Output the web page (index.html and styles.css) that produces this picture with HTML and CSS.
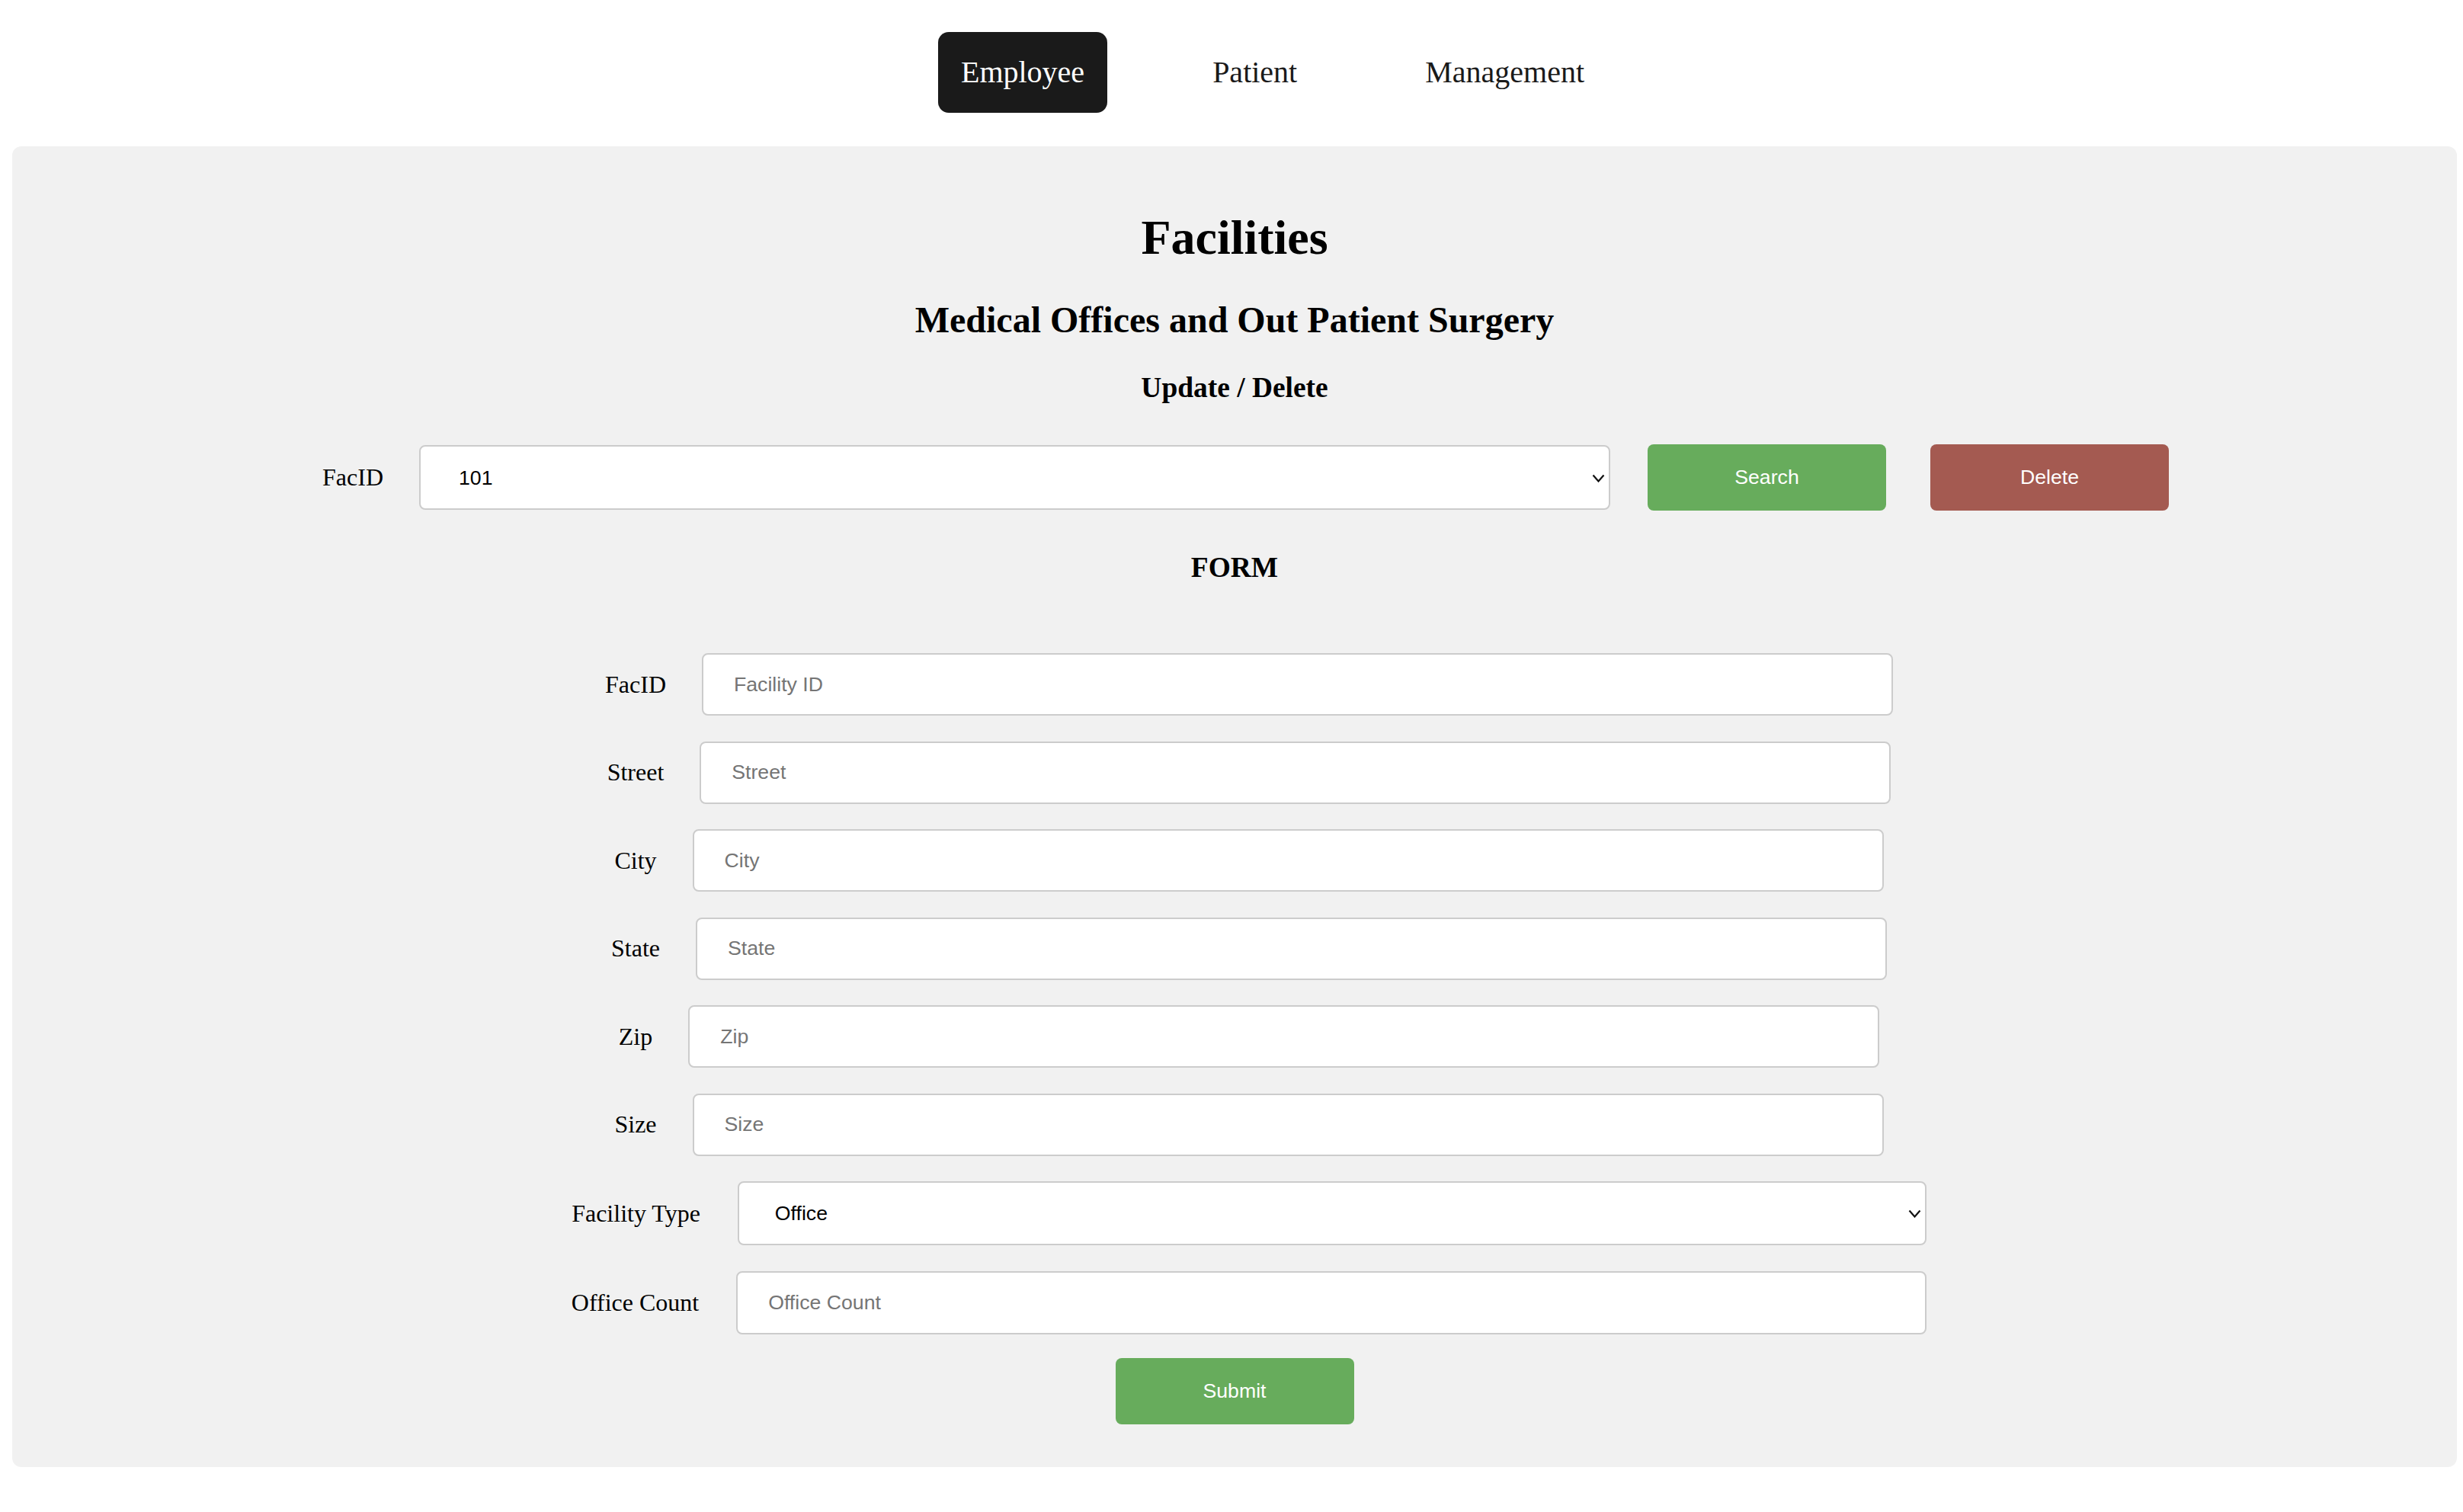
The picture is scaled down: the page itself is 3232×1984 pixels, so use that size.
FILE: index.html
```html
<!DOCTYPE html>
<html lang="en">
<head>
<meta charset="utf-8">
<title>Facilities</title>
<link rel="stylesheet" href="styles.css">
</head>
<body>
<nav class="topnav">
  <a class="navlink active" href="#">Employee</a>
  <a class="navlink" href="#">Patient</a>
  <a class="navlink" href="#">Management</a>
</nav>
<main class="panel">
  <h1 class="title">Facilities</h1>
  <h2 class="subtitle">Medical Offices and Out Patient Surgery</h2>
  <h3 class="section">Update / Delete</h3>
  <div class="searchrow">
    <label class="lbl">FacID</label>
    <div class="selwrap sel-top">
      <select class="sel"><option>101</option></select>
      <svg class="chev" width="17" height="11" viewBox="0 0 17 11"><polyline points="1.5,1.5 8.5,9.5 15.5,1.5" fill="none" stroke="#111" stroke-width="2.2"/></svg>
    </div>
    <button class="btn btn-green btn-search">Search</button>
    <button class="btn btn-red btn-delete">Delete</button>
  </div>
  <h3 class="section">FORM</h3>
  <form class="form">
    <div class="frow"><label class="lbl">FacID</label><input class="inp" placeholder="Facility ID"></div>
    <div class="frow"><label class="lbl">Street</label><input class="inp" placeholder="Street"></div>
    <div class="frow"><label class="lbl">City</label><input class="inp" placeholder="City"></div>
    <div class="frow"><label class="lbl">State</label><input class="inp" placeholder="State"></div>
    <div class="frow"><label class="lbl">Zip</label><input class="inp" placeholder="Zip"></div>
    <div class="frow"><label class="lbl">Size</label><input class="inp" placeholder="Size"></div>
    <div class="frow frow-wide">
      <label class="lbl">Facility Type</label>
      <div class="selwrap sel-form">
        <select class="sel"><option>Office</option></select>
        <svg class="chev" width="17" height="11" viewBox="0 0 17 11"><polyline points="1.5,1.5 8.5,9.5 15.5,1.5" fill="none" stroke="#111" stroke-width="2.2"/></svg>
      </div>
    </div>
    <div class="frow frow-wide"><label class="lbl">Office Count</label><input class="inp inp-wide" placeholder="Office Count"></div>
    <div class="submitrow"><button class="btn btn-green" type="button">Submit</button></div>
  </form>
</main>
</body>
</html>
```
FILE: styles.css
```css
html, body {
  background: #ffffff;
}
body {
  margin: 16px 8px 0 16px;
  font-family: "Liberation Serif", "Times New Roman", serif;
  color: #000;
}
.topnav {
  display: flex;
  justify-content: center;
  align-items: center;
  gap: 108px;
  padding: 26px 0 0 100px;
  margin-bottom: 44px;
}
.navlink {
  display: block;
  font-size: 40px;
  line-height: 46px;
  padding: 30px 30px;
  color: #1a1a1a;
  text-decoration: none;
  border-radius: 14px;
}
.navlink.active {
  background: #1a1a1a;
  color: #ffffff;
}
.panel {
  display: block;
  background: #f1f1f1;
  border-radius: 12px;
  padding: 40px 40px 56px;
}
.title {
  font-size: 64px;
  line-height: 74px;
  margin: 43px 0;
  text-align: center;
}
.subtitle {
  font-size: 48px;
  line-height: 55px;
  margin: 40px 0;
  text-align: center;
}
.section {
  font-size: 37.44px;
  line-height: 43px;
  margin: 37px 0;
  text-align: center;
}
.searchrow {
  display: flex;
  justify-content: center;
  align-items: center;
  padding: 16px 0 16px 29px;
}
.lbl {
  font-family: "Liberation Serif", "Times New Roman", serif;
  font-size: 32px;
  line-height: 37px;
  white-space: nowrap;
}
.selwrap {
  position: relative;
  display: block;
}
.sel-top {
  margin-left: 47px;
  margin-right: 49px;
}
.sel {
  appearance: none;
  -webkit-appearance: none;
  display: block;
  box-sizing: border-box;
  width: 1563px;
  height: 85px;
  border: 2px solid #cccccc;
  border-radius: 8px;
  background: #ffffff;
  padding: 0 40px 0 50px;
  font-family: "Liberation Sans", Arial, sans-serif;
  font-size: 26.67px;
  color: #000;
  margin: 0;
}
.sel-form .sel {
  width: 1560px;
  height: 84px;
  padding-left: 47px;
}
.chev {
  position: absolute;
  right: 7px;
  top: 50%;
  margin-top: -5px;
  pointer-events: none;
}
.btn {
  box-sizing: border-box;
  width: 313px;
  height: 87px;
  border: none;
  border-radius: 8px;
  font-family: "Liberation Sans", Arial, sans-serif;
  font-size: 26.67px;
  color: #ffffff;
  margin: 0;
  padding: 0;
}
.btn-green {
  background: #67ac5c;
}
.btn-red {
  background: #a45a51;
}
.btn-delete {
  margin-left: 58px;
}
.form {
  display: flex;
  flex-direction: column;
  gap: 33.5px;
  padding-top: 54px;
  margin: 0;
}
.frow {
  display: flex;
  justify-content: center;
  align-items: center;
  gap: 47px;
  padding-left: 38px;
}
.frow-wide {
  gap: 49px;
}
.inp {
  box-sizing: border-box;
  width: 1563px;
  height: 82px;
  border: 2px solid #cccccc;
  border-radius: 8px;
  background: #ffffff;
  padding: 0 40px;
  font-family: "Liberation Sans", Arial, sans-serif;
  font-size: 26.67px;
  color: #000;
  margin: 0;
}
.inp-wide {
  width: 1562px;
  height: 83px;
}
.inp::placeholder {
  color: #757575;
}
.submitrow {
  display: flex;
  justify-content: center;
  margin-top: -2.5px;
}
```
